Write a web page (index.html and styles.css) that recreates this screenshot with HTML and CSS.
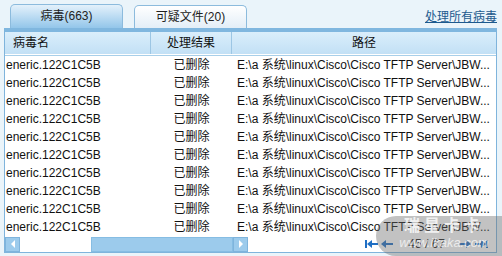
FILE: index.html
```html
<!DOCTYPE html>
<html lang="zh-CN">
<head>
    <meta charset="UTF-8">
    <title>病毒列表</title>
    <link rel="stylesheet" href="styles.css">
</head>
<body>
    <div class="panel">
        <div class="tabs">
            <div class="tab active">病毒(663)</div>
            <div class="tab">可疑文件(20)</div>
            <a class="handle-all" href="#">处理所有病毒</a>
        </div>
        <div class="grid">
            <div class="head">
                <div class="col-name">病毒名</div>
                <div class="col-result">处理结果</div>
                <div class="col-path">路径</div>
            </div>
            <div class="body">
                <div class="row"><div class="col-name">eneric.122C1C5B</div><div class="col-result">已删除</div><div class="col-path">E:\a 系统\linux\Cisco\Cisco TFTP Server\JBW...</div></div>
                <div class="row"><div class="col-name">eneric.122C1C5B</div><div class="col-result">已删除</div><div class="col-path">E:\a 系统\linux\Cisco\Cisco TFTP Server\JBW...</div></div>
                <div class="row"><div class="col-name">eneric.122C1C5B</div><div class="col-result">已删除</div><div class="col-path">E:\a 系统\linux\Cisco\Cisco TFTP Server\JBW...</div></div>
                <div class="row"><div class="col-name">eneric.122C1C5B</div><div class="col-result">已删除</div><div class="col-path">E:\a 系统\linux\Cisco\Cisco TFTP Server\JBW...</div></div>
                <div class="row"><div class="col-name">eneric.122C1C5B</div><div class="col-result">已删除</div><div class="col-path">E:\a 系统\linux\Cisco\Cisco TFTP Server\JBW...</div></div>
                <div class="row"><div class="col-name">eneric.122C1C5B</div><div class="col-result">已删除</div><div class="col-path">E:\a 系统\linux\Cisco\Cisco TFTP Server\JBW...</div></div>
                <div class="row"><div class="col-name">eneric.122C1C5B</div><div class="col-result">已删除</div><div class="col-path">E:\a 系统\linux\Cisco\Cisco TFTP Server\JBW...</div></div>
                <div class="row"><div class="col-name">eneric.122C1C5B</div><div class="col-result">已删除</div><div class="col-path">E:\a 系统\linux\Cisco\Cisco TFTP Server\JBW...</div></div>
                <div class="row"><div class="col-name">eneric.122C1C5B</div><div class="col-result">已删除</div><div class="col-path">E:\a 系统\linux\Cisco\Cisco TFTP Server\JBW...</div></div>
                <div class="row"><div class="col-name">eneric.122C1C5B</div><div class="col-result">已删除</div><div class="col-path">E:\a 系统\linux\Cisco\Cisco TFTP Server\JBW...</div></div>
            </div>
            <div class="foot">
                <div class="hscroll">
                    <div class="sbtn"><svg width="6" height="8" viewBox="0 0 6 8"><path d="M5 0 L1 4 L5 8 Z" fill="#fff"/></svg></div>
                    <div class="track"><div class="thumb"></div></div>
                    <div class="sbtn"><svg width="6" height="8" viewBox="0 0 6 8"><path d="M1 0 L5 4 L1 8 Z" fill="#fff"/></svg></div>
                </div>
                <div class="pager">
                    <svg width="14" height="10" viewBox="0 0 14 10"><rect x="0" y="1" width="2" height="8" fill="#1f6fc4"/><path d="M2 5 L7 1 L7 4 L13 4 L13 6 L7 6 L7 9 Z" fill="#1f6fc4"/></svg>
                    <svg width="13" height="10" viewBox="0 0 13 10"><path d="M0 5 L5 1 L5 4 L12 4 L12 6 L5 6 L5 9 Z" fill="#1f6fc4"/></svg>
                    <span class="page-no">45 / 67</span>
                    <svg width="13" height="10" viewBox="0 0 13 10"><path d="M12 5 L7 1 L7 4 L0 4 L0 6 L7 6 L7 9 Z" fill="#1f6fc4"/></svg>
                    <svg width="14" height="10" viewBox="0 0 14 10"><rect x="12" y="1" width="2" height="8" fill="#1f6fc4"/><path d="M12 5 L7 1 L7 4 L1 4 L1 6 L7 6 L7 9 Z" fill="#1f6fc4"/></svg>
                </div>
            </div>
        </div>
    </div>
    <div class="watermark">
        <span class="wm-brand">瑞星卡卡</span>
        <span class="wm-url">www.ikaka.com</span>
    </div>
</body>
</html>
```

FILE: styles.css
```css
body {
    margin: 0;
    background-color: #eaf4fa;
    font-family: "Liberation Sans", "Noto Sans CJK SC", sans-serif;
    font-size: 12px;
    color: #111;
    position: relative;
    height: 256px;
    overflow: hidden;
}
.panel {
    padding: 5px 5px 0 4px;
}
.tabs {
    display: flex;
    align-items: flex-end;
    height: 23px;
    padding-left: 6px;
}
.tab {
    width: 111px;
    height: 22px;
    line-height: 22px;
    text-align: center;
    border: 1px solid #8cbbdd;
    border-bottom: none;
    border-radius: 5px 5px 0 0;
    background: linear-gradient(#ffffff, #e3eef7);
    margin-right: 11px;
    color: #222;
}
.tab.active {
    height: 23px;
    background: linear-gradient(#e4f1fb, #93c6ea);
}
.handle-all {
    margin-left: auto;
    margin-bottom: 4px;
    color: #1d5a8e;
    font-size: 12px;
}
.grid {
    width: 491px;
    border: 1px solid #7fb4dc;
    border-top: 4px solid #80b7df;
    background-color: #ffffff;
}
.head, .row {
    display: flex;
}
.head > div, .row > div {
    box-sizing: border-box;
}
.head {
    height: 22px;
    line-height: 22px;
    background: linear-gradient(#daeefb, #c2e0f5);
    border-bottom: 1px solid #ffffff;
    box-shadow: 0 1px 0 #a8cfe9;
}
.head > div {
    border-right: 1px solid #9cc6e4;
}
.head .col-name {
    padding-left: 8px;
}
.col-name {
    width: 146px;
    padding-left: 1px;
    flex-shrink: 0;
}
.col-result {
    width: 81px;
    flex-shrink: 0;
    text-align: center;
}
.col-path {
    flex: 1;
    padding-left: 5px;
    white-space: nowrap;
    overflow: hidden;
}
.head .col-path {
    padding-left: 0;
    border-right: none;
    text-align: center;
}
.body {
    padding-top: 1px;
}
.row {
    height: 18px;
    line-height: 18px;
}
.foot {
    display: flex;
    align-items: center;
    height: 16px;
}
.hscroll {
    display: flex;
    width: 243px;
    height: 15px;
}
.sbtn {
    width: 15px;
    height: 15px;
    background-color: #9ccbec;
    border: 1px solid #7fb4dc;
    box-sizing: border-box;
    display: flex;
    align-items: center;
    justify-content: center;
}
.track {
    flex: 1;
    display: flex;
    background-color: #ffffff;
    padding-left: 71px;
}
.thumb {
    flex: 1;
    background-color: #9ccbec;
    border: 1px solid #86bde3;
}
.pager {
    margin-left: auto;
    margin-right: 8px;
    display: flex;
    align-items: center;
    gap: 2px;
}
.page-no {
    margin: 0 12px;
    color: #222;
}
.watermark {
    position: absolute;
    left: 376px;
    top: 216px;
    width: 136px;
    height: 40px;
    border-radius: 24px 0 0 24px;
    background-color: rgba(110, 110, 110, 0.42);
    display: flex;
    flex-direction: column;
    align-items: center;
    pointer-events: none;
}
.wm-brand {
    color: rgba(255, 255, 255, 0.8);
    font-weight: bold;
    font-size: 16px;
    line-height: 20px;
    letter-spacing: 4px;
}
.wm-url {
    color: rgba(255, 255, 255, 0.7);
    font-style: italic;
    font-size: 13px;
    line-height: 14px;
}
```
